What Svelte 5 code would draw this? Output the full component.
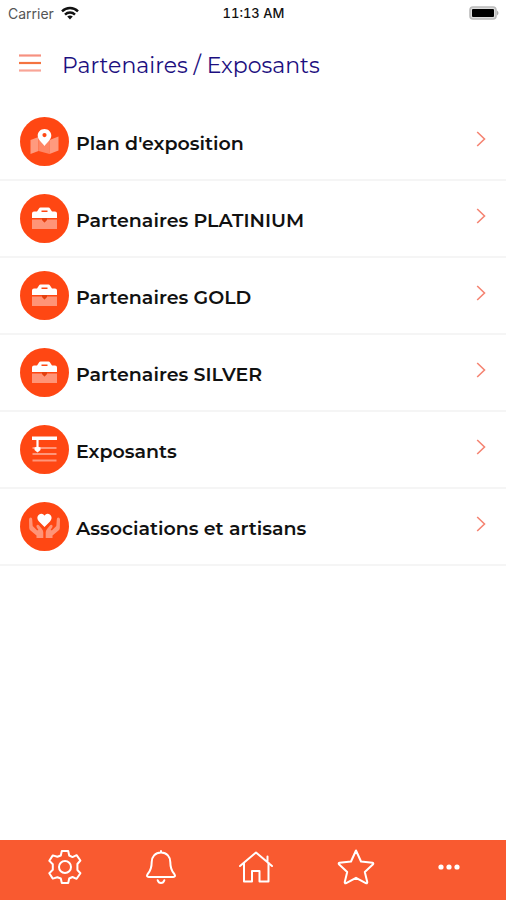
<script>
	const items = [
		{ label: "Plan d'exposition", icon: 'map' },
		{ label: 'Partenaires PLATINIUM', icon: 'case' },
		{ label: 'Partenaires GOLD', icon: 'case' },
		{ label: 'Partenaires SILVER', icon: 'case' },
		{ label: 'Exposants', icon: 'list' },
		{ label: 'Associations et artisans', icon: 'hands' }
	]
</script>

<div class="app">
	<div class="status">
		<span class="carrier">
			Carrier
			<svg width="18" height="14" viewBox="0 0 18 14" aria-hidden="true">
				<g fill="none" stroke="#111" stroke-width="2.4">
					<path d="M1 5.3C5.5 0.8 12.5 0.8 17 5.3" />
					<path d="M4 8.6C6.8 5.8 11.2 5.8 14 8.6" />
				</g>
				<path d="M6.2 10.6Q9 8.2 11.8 10.6L9 13.5Z" fill="#111" />
			</svg>
		</span>
		<time>11:13 AM</time>
		<svg class="battery" width="30" height="14" viewBox="0 0 30 14" aria-hidden="true">
			<rect x="1" y="1" width="26" height="12" rx="3" fill="#ddd" stroke="#bbb" stroke-width="1.6" />
			<rect x="3" y="3" width="22" height="8" rx="1" fill="#000" />
			<path d="M28 4.5Q31 7 28 9.5Z" fill="#aaa" />
		</svg>
	</div>

	<header>
		<button class="menu" aria-label="Menu">
			<svg width="22" height="20" viewBox="0 0 22 20">
				<path d="M0 2.5H22" stroke="#f69080" stroke-width="2.2" />
				<path d="M0 10H22" stroke="#f4733f" stroke-width="2.2" />
				<path d="M0 17.5H22" stroke="#f9a597" stroke-width="2.2" />
			</svg>
		</button>
		<h1>Partenaires / Exposants</h1>
	</header>

	<main>
		<ul>
			{#each items as item}
				<li>
					<a href="#top">
						<svg width="49" height="49" viewBox="0 0 49 49" aria-hidden="true">
							<circle cx="24.5" cy="24.5" r="24.5" fill="#ff4713" />
							{#if item.icon === 'map'}
								<path d="M10.5 23L18.5 20V34L10.5 37Z" fill="#ff9a7e" />
								<path d="M18.5 20L29.5 23V37L18.5 34Z" fill="#ff8564" />
								<path d="M29.5 23L38.5 19.5V33.5L29.5 37Z" fill="#ff9a7e" />
								<path
									fill="#fff"
									fill-rule="evenodd"
									d="M24.5 12C20.6 12 17.7 14.9 17.7 18.6C17.7 22.5 21.5 25.5 24.5 29C27.5 25.5 31.3 22.5 31.3 18.6C31.3 14.9 28.4 12 24.5 12ZM24.5 16A2.1 2.1 0 1 1 24.5 20.2A2.1 2.1 0 1 1 24.5 16Z"
								/>
							{:else if item.icon === 'case'}
								<path
									fill="#fff"
									fill-rule="evenodd"
									d="M12 24V19.5Q12 17.5 14 17.5H17L19 14.5Q19.5 13.5 20.5 13.5H28.5Q29.5 13.5 30 14.5L32 17.5H35Q37 17.5 37 19.5V24ZM21.5 16.5V18H27.5V16.5Z"
								/>
								<path d="M12 25.5H22L24.5 28.5L27 25.5H37V35H12Z" fill="#ff9477" />
								<path d="M22 24H27V26L24.5 28.5L22 26Z" fill="#e3400f" />
							{:else if item.icon === 'list'}
								<path
									d="M12.5 23H36.5M12.5 29H36.5M12.5 35.5H36.5"
									stroke="#ff967a"
									stroke-width="2"
								/>
								<path d="M12 11.5H37V15H12Z" fill="#fff" />
								<path d="M16.4 15H18.6V22H16.4Z" fill="#fff" />
								<path d="M17.5 27.5L14.5 25V22.5Q17.5 21 20.5 22.5V25Z" fill="#fff" />
							{:else}
								<path
									fill="#ff9477"
									d="M9 17.5Q9.2 15.5 10.7 15.5Q12.2 15.7 12.2 17.5L12.7 24L17 28.2Q18 28.7 18.3 27.7L16.5 25Q16 23.3 17.5 22.8Q18.5 22.7 19.5 24L22 27Q23.3 28.5 23.3 30.5V36H16.5V33.5L10.5 28.5Q9.3 27.5 9.2 26Z"
								/>
								<path
									fill="#ff9477"
									d="M40 17.5Q39.8 15.5 38.3 15.5Q36.8 15.7 36.8 17.5L36.3 24L32 28.2Q31 28.7 30.7 27.7L32.5 25Q33 23.3 31.5 22.8Q30.5 22.7 29.5 24L27 27Q25.7 28.5 25.7 30.5V36H32.5V33.5L38.5 28.5Q39.7 27.5 39.8 26Z"
								/>
								<path
									fill="#fff"
									d="M24.5 25L19 19.5C15.5 15.5 18.5 11.5 21.5 11.7C23 11.8 24 12.7 24.5 13.7C25 12.7 26 11.8 27.5 11.7C30.5 11.5 33.5 15.5 30 19.5Z"
								/>
							{/if}
						</svg>
						<span class="label">{item.label}</span>
						<svg class="chevron" width="10" height="16" viewBox="0 0 10 16" aria-hidden="true">
							<path d="M1.2 1L8.5 8L1.2 15" fill="none" stroke="#f58472" stroke-width="1.6" />
						</svg>
					</a>
				</li>
			{/each}
		</ul>
	</main>

	<nav>
		<button aria-label="Réglages">
			<svg width="34" height="34" viewBox="0 0 34 34">
				<path
					d="M13.8 1H20.2L21.2 5.5L24.5 7.1L28.6 5.2L32.4 10.5L29.4 14V20L32.4 23.2L28.6 28.8L24.5 27L21.2 28.5L20.2 33H13.8L12.8 28.5L9.4 27.2L4.8 28.6L1.3 23.2L4.8 19.8V14.2L1.3 10.8L4.8 5.4L9.4 6.8L12.8 5.5Z"
				/>
				<circle cx="17" cy="17" r="6" />
			</svg>
		</button>
		<button aria-label="Notifications">
			<svg width="30" height="34" viewBox="1 0 30 34">
				<path
					d="M16 2.5C10 2.5 6.7 7 6.7 12C6.7 19 5 21.5 2.7 24Q0.9 26.8 3.8 27H28.2Q31.1 26.8 29.3 24C27 21.5 25.3 19 25.3 12C25.3 7 22 2.5 16 2.5ZM16 1V2.5M12.7 30.2Q13.5 33 16 33Q18.5 33 19.3 30.2"
				/>
			</svg>
		</button>
		<button aria-label="Accueil">
			<svg width="34" height="34" viewBox="0 0 34 34">
				<path d="M1 16L17 2.5L33 16M28.5 12V6.5" />
				<path d="M5 13V31.5H13V21H20.5V31.5H29.5V13" />
			</svg>
		</button>
		<button aria-label="Favoris">
			<svg width="38" height="36" viewBox="0 0 38 36">
				<path
					d="M19 1.5L24 12.5L35.5 13.8Q37 14.2 35.8 15.5L27.8 23L30.3 33.3Q30.2 34.8 28.8 34.2L19 28.8L9.2 34.2Q7.8 34.8 7.7 33.3L10.2 23L2.2 15.5Q1 14.2 2.5 13.8L14 12.5Z"
				/>
			</svg>
		</button>
		<button aria-label="Plus">
			<svg class="dots" width="22" height="6" viewBox="0 0 22 6">
				<circle cx="3" cy="3" r="2.6" />
				<circle cx="11" cy="3" r="2.6" />
				<circle cx="19" cy="3" r="2.6" />
			</svg>
		</button>
	</nav>
</div>

<style>
	:global(body) {
		margin: 0;
		background: #fff;
	}
	.app {
		display: flex;
		flex-direction: column;
		min-height: 100vh;
		font-family: Montserrat, Inter, sans-serif;
		color: #111;
	}
	svg {
		display: block;
		flex: none;
	}
	button {
		border: 0;
		padding: 0;
		background: none;
		cursor: pointer;
	}
	.status {
		display: grid;
		grid-template-columns: 1fr auto 1fr;
		align-items: center;
		height: 26px;
		padding: 0 7px 0 8px;
		font-family: Inter, sans-serif;
		font-size: 14px;
	}
	.carrier {
		display: flex;
		align-items: center;
		gap: 7px;
		color: #555;
	}
	time {
		font-size: 13px;
		font-weight: 500;
		font-variant-numeric: tabular-nums;
	}
	.battery {
		justify-self: end;
	}
	header {
		display: flex;
		align-items: center;
		gap: 21px;
		height: 78px;
		padding: 0 19px;
	}
	.menu {
		padding-bottom: 4px;
	}
	h1 {
		margin: 0;
		font-size: 22px;
		font-weight: 400;
		color: #1c0f80;
	}
	main {
		flex: 1;
	}
	ul {
		margin: 0;
		padding: 0;
		list-style: none;
	}
	li {
		border-bottom: 2px solid #f5f5f5;
	}
	a {
		display: flex;
		align-items: center;
		gap: 7px;
		height: 75px;
		padding: 0 20px;
		color: inherit;
		text-decoration: none;
	}
	.label {
		flex: 1;
		padding-top: 4px;
		font-size: 19px;
		font-weight: 600;
	}
	.chevron {
		margin-bottom: 6px;
	}
	nav {
		display: flex;
		justify-content: space-between;
		align-items: center;
		height: 60px;
		padding: 0 46px 6px 48px;
		box-sizing: border-box;
		background: #f95a30;
	}
	nav svg {
		fill: none;
		stroke: #fff;
		stroke-width: 2;
		stroke-linejoin: round;
		stroke-linecap: round;
	}
	nav .dots {
		fill: #fff;
		stroke: none;
	}
</style>
